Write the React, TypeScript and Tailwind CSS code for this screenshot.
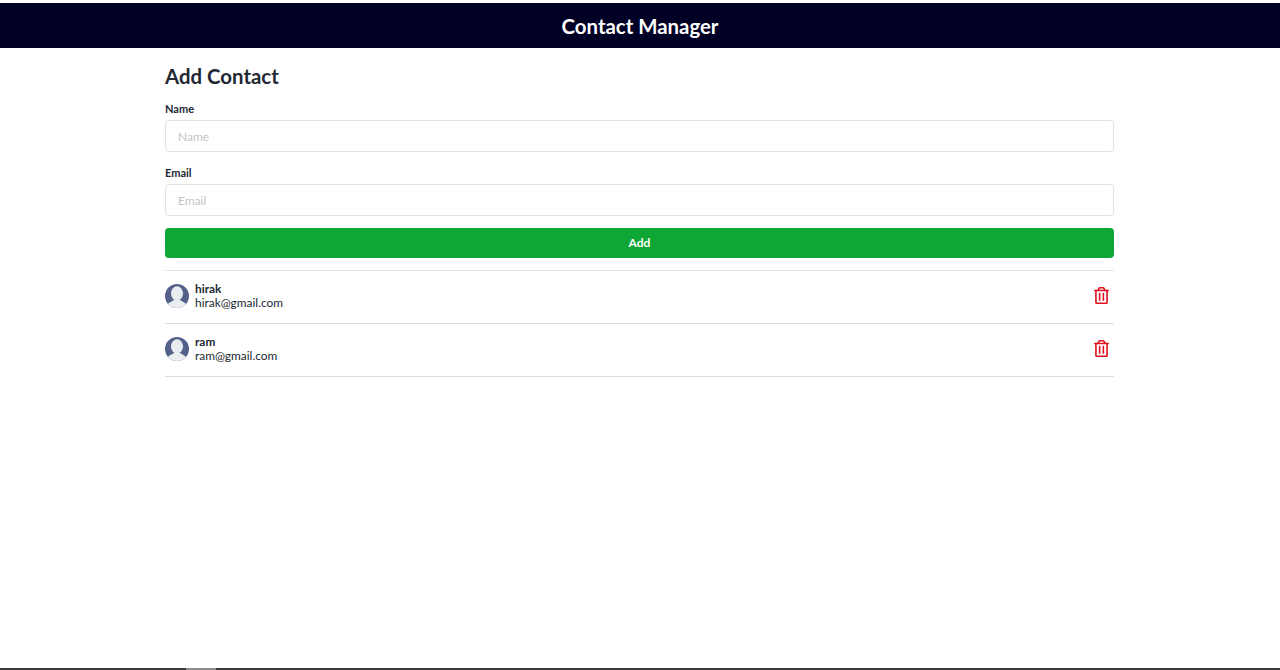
import { FaRegTrashAlt } from "react-icons/fa";

const contacts = [
  { name: "hirak", email: "hirak@gmail.com" },
  { name: "ram", email: "ram@gmail.com" },
];

function Avatar() {
  return (
    <svg width="24" height="24" viewBox="0 0 24 24" className="shrink-0">
      <defs>
        <clipPath id="avatar-clip">
          <circle cx="12" cy="12" r="12" />
        </clipPath>
      </defs>
      <g clipPath="url(#avatar-clip)">
        <rect width="24" height="24" fill="#54618a" />
        <ellipse cx="12" cy="9.5" rx="6" ry="7.2" fill="#e9edf0" />
        <path d="M1 24c.6-4.6 4.8-6 8-8h6c3.2 2 7.4 3.4 8 8z" fill="#e9edf0" />
      </g>
    </svg>
  );
}

function Field({ label }: { label: string }) {
  return (
    <div className="mb-[12px]">
      <label className="block pt-[1px] mb-[3px] text-[11px] leading-[16px] font-bold text-[#212833]">{label}</label>
      <input
        placeholder={label}
        className="block w-full h-[32px] px-[12px] text-[12px] border border-[#dfe1e4] rounded-[4px] outline-none placeholder:text-[#c4c4c4]"
      />
    </div>
  );
}

export default function App() {
  return (
    <div className="h-[670px] flex flex-col bg-white font-['Lato','Liberation_Sans',sans-serif] overflow-hidden">
      <header className="mt-[3px] h-[45px] pt-[1px] flex items-center justify-center bg-[#000025] text-white text-[20.4px] font-bold">
        Contact Manager
      </header>

      <main className="w-[949px] ml-[165px] flex-1">
        <h2 className="mt-[15px] mb-[10px] text-[20.4px] leading-[27px] font-bold text-[#212833]">Add Contact</h2>

        <Field label="Name" />
        <Field label="Email" />

        <button className="w-full h-[30px] mb-[12px] bg-[#0ea635] rounded-[4px] text-white text-[12px] font-bold">
          Add
        </button>

        <div className="border-t border-[#e3e4e6]">
          {contacts.map((c) => (
            <div key={c.email} className="h-[53px] flex items-center gap-[6px] pb-[2px] border-b border-[#dcdcdd]">
              <Avatar />
              <div className="flex-1 text-[11.9px] leading-[14px] text-[#212833]">
                <div className="font-bold">{c.name}</div>
                <div>{c.email}</div>
              </div>
              <FaRegTrashAlt className="mr-[4px] mb-[1px] text-[#e0101c] text-[17px]" />
            </div>
          ))}
        </div>
      </main>

      {/* strip at the bottom edge of the shot */}
      <div className="h-[2px] flex bg-[#3c3c3c]">
        <div className="w-[186px]" />
        <div className="w-[30px] bg-[#8c8c8c]" />
      </div>
    </div>
  );
}
